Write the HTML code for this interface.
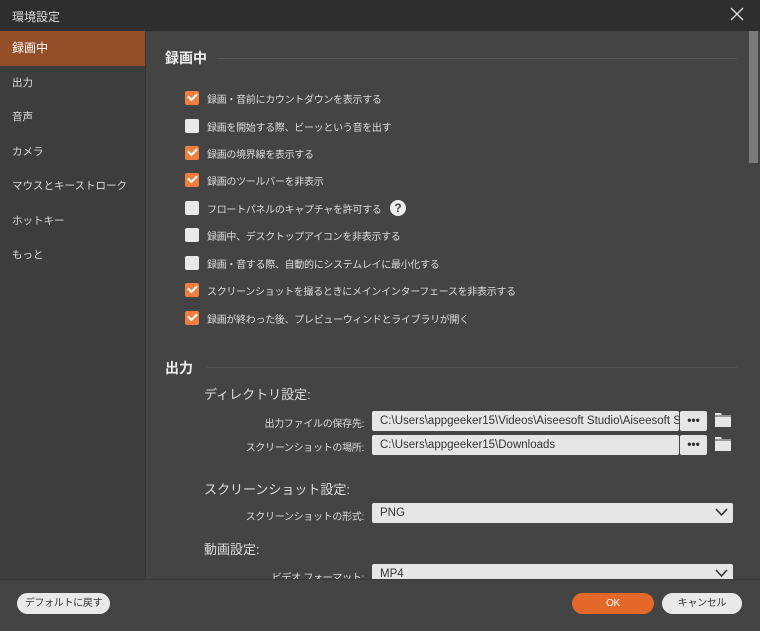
<!DOCTYPE html>
<html><head><meta charset="utf-8"><style>
*{margin:0;padding:0;box-sizing:border-box}
body{width:760px;height:631px;background:#444;font-family:"Liberation Sans","Noto Sans CJK JP",sans-serif;color:#ddd;position:relative;overflow:hidden;font-size:11px}
.title{position:absolute;left:0;top:0;width:760px;height:31px;background:#2e2e2e;color:#ddd;font-size:12px;padding:8px 0 0 12px}
.close{position:absolute;right:16px;top:7px}
.side{position:absolute;left:0;top:31px;width:146px;height:548px;background:#3d3d3d;border-right:1px solid #363636}
.side div{height:34.5px;line-height:34.5px;padding-left:12px;font-size:10.5px;color:#ddd}
.side .sel{background:#954f28;color:#fff;font-size:12px}
.content{position:absolute;left:147px;top:31px;width:613px;height:548px;overflow:hidden}
.h{position:absolute;left:18px;font-size:14px;color:#eee;font-weight:bold}
.line{position:absolute;height:1px;background:#555}
.cb{position:absolute;left:38px;height:14px;font-size:10px;color:#ddd;white-space:nowrap}
.cb i{position:absolute;left:0;top:0;width:14px;height:14px;border-radius:2px;background:#e9e9e9}
.cb i.on{background:#ee7f3f}
.cb i.on:after{content:"";position:absolute;left:3px;top:2px;width:7px;height:4px;border-left:2px solid #fff;border-bottom:2px solid #fff;transform:rotate(-45deg)}
.cb span{position:absolute;left:22px;top:0;letter-spacing:-0.3px}
.sub{position:absolute;left:57px;font-size:13px;color:#ddd}
.lab{position:absolute;right:396px;font-size:10px;color:#ddd;white-space:nowrap;letter-spacing:-0.3px}
.field{position:absolute;left:225px;height:20px;background:#e6e6e6;color:#333;font-size:11.5px;line-height:20px;padding-left:8px;border-radius:2px;white-space:nowrap;overflow:hidden}
.dots{position:absolute;height:20px;width:27px;background:#e6e6e6;color:#333;font-weight:bold;text-align:center;line-height:18px;border-radius:2px;font-size:12px}
.sb{position:absolute;left:749px;top:31px;width:9px;height:132px;background:#7a7a7a}
.foot{position:absolute;left:0;top:579px;width:760px;height:52px;background:#444;border-top:1px solid #383838}
.btn{position:absolute;top:593px;height:21px;border-radius:11px;font-size:10px;text-align:center;line-height:21px;white-space:nowrap;letter-spacing:-0.3px}
</style></head><body>
<div class="title">環境設定
<svg class="close" width="14" height="14" viewBox="0 0 14 14"><path d="M1 1L13 13M13 1L1 13" stroke="#ddd" stroke-width="1.3"/></svg></div>
<div class="side">
<div class="sel">録画中</div><div>出力</div><div>音声</div><div>カメラ</div><div>マウスとキーストローク</div><div>ホットキー</div><div>もっと</div>
</div>
<div class="content">
<div class="h" style="top:17px">録画中</div><div class="line" style="left:70px;top:27px;width:520px"></div>
<div class="cb" style="top:60px"><i class="on"></i><span>録画・音前にカウントダウンを表示する</span></div>
<div class="cb" style="top:88px"><i></i><span>録画を開始する際、ビーッという音を出す</span></div>
<div class="cb" style="top:115px"><i class="on"></i><span>録画の境界線を表示する</span></div>
<div class="cb" style="top:142px"><i class="on"></i><span>録画のツールバーを非表示</span></div>
<div class="cb" style="top:170px"><i></i><span>フロートパネルのキャプチャを許可する</span></div>
<div style="position:absolute;left:243px;top:169px;width:16px;height:16px;border-radius:50%;background:#eee;color:#444;font-weight:bold;font-size:12px;text-align:center;line-height:16px">?</div>
<div class="cb" style="top:197px"><i></i><span>録画中、デスクトップアイコンを非表示する</span></div>
<div class="cb" style="top:225px"><i></i><span>録画・音する際、自動的にシステムレイに最小化する</span></div>
<div class="cb" style="top:252px"><i class="on"></i><span>スクリーンショットを撮るときにメインインターフェースを非表示する</span></div>
<div class="cb" style="top:280px"><i class="on"></i><span>録画が終わった後、プレビューウィンドとライブラリが開く</span></div>
<div class="h" style="top:327px">出力</div><div class="line" style="left:60px;top:336px;width:530px"></div>
<div class="sub" style="top:353px">ディレクトリ設定:</div>
<div class="lab" style="top:384px">出力ファイルの保存先:</div>
<div class="field" style="top:380px;width:307px">C:\Users\appgeeker15\Videos\Aiseesoft Studio\Aiseesoft Studio</div>
<div class="dots" style="left:533px;top:380px">•••</div>
<svg style="position:absolute;left:568px;top:381px" width="16" height="15" viewBox="0 0 16 15"><path d="M0 1h6l1 2h9v12H0z" fill="#e6e6e6"/><path d="M0 4h16" stroke="#444" stroke-width="1"/></svg>
<div class="lab" style="top:408px">スクリーンショットの場所:</div>
<div class="field" style="top:404px;width:307px">C:\Users\appgeeker15\Downloads</div>
<div class="dots" style="left:533px;top:404px">•••</div>
<svg style="position:absolute;left:568px;top:405px" width="16" height="15" viewBox="0 0 16 15"><path d="M0 1h6l1 2h9v12H0z" fill="#e6e6e6"/><path d="M0 4h16" stroke="#444" stroke-width="1"/></svg>
<div class="sub" style="top:448px">スクリーンショット設定:</div>
<div class="lab" style="top:477px">スクリーンショットの形式:</div>
<div class="field" style="top:472px;width:361px">PNG</div>
<svg style="position:absolute;left:568px;top:477px" width="13" height="9" viewBox="0 0 13 9"><path d="M1 1l5.5 6L12 1" stroke="#333" stroke-width="1.6" fill="none"/></svg>
<div class="sub" style="top:508px">動画設定:</div>
<div class="lab" style="top:538px">ビデオ フォーマット:</div>
<div class="field" style="top:533px;width:361px">MP4</div>
<svg style="position:absolute;left:568px;top:538px" width="13" height="9" viewBox="0 0 13 9"><path d="M1 1l5.5 6L12 1" stroke="#333" stroke-width="1.6" fill="none"/></svg>
</div>
<div class="sb"></div>
<div class="foot"></div>
<div class="btn" style="left:17px;width:93px;background:#e9e9e9;color:#333">デフォルトに戻す</div>
<div class="btn" style="left:572px;width:82px;background:#e3682a;color:#fff">OK</div>
<div class="btn" style="left:662px;width:80px;background:#e9e9e9;color:#333">キャンセル</div>
</body></html>
